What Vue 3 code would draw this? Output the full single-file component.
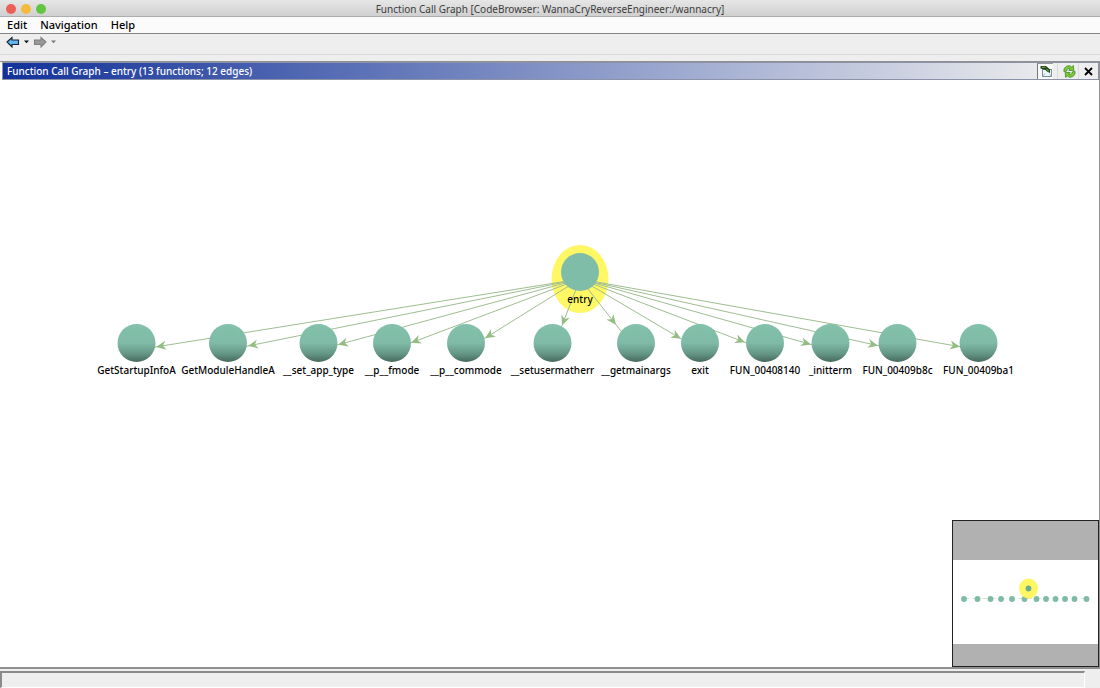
<script setup>
const root = { x: 580, y: 279 }
const nodes = [
  { x: 136.5, label: 'GetStartupInfoA', tip: 156 },
  { x: 228, label: 'GetModuleHandleA', tip: 248 },
  { x: 318.5, label: '__set_app_type', tip: 338 },
  { x: 392, label: '__p__fmode', tip: 411 },
  { x: 466, label: '__p__commode', tip: 485 },
  { x: 552.5, label: '__setusermatherr', tip: 562 },
  { x: 636, label: '__getmainargs', tip: 616 },
  { x: 700, label: 'exit', tip: 681 },
  { x: 765, label: 'FUN_00408140', tip: 745 },
  { x: 830.5, label: '_initterm', tip: 811 },
  { x: 897.5, label: 'FUN_00409b8c', tip: 878 },
  { x: 978.5, label: 'FUN_00409ba1', tip: 960 },
]
const targetY = 350

function arrow(n) {
  const dx = n.x - root.x
  const dy = targetY - root.y
  const y = root.y + ((n.tip - root.x) / dx) * dy
  const angle = (Math.atan2(dy, dx) * 180) / Math.PI
  return `translate(${n.tip} ${y}) rotate(${angle})`
}

const miniDots = [964, 977.5, 990.5, 1001, 1012, 1024.5, 1036.5, 1046, 1055.5, 1065, 1074.5, 1086.5]
</script>

<template>
  <div class="window">
    <header class="titlebar">
      <div class="lights">
        <button class="light red" aria-label="Close window"></button>
        <button class="light amber" aria-label="Minimize window"></button>
        <button class="light green" aria-label="Zoom window"></button>
      </div>
      <h1>Function Call Graph [CodeBrowser: WannaCryReverseEngineer:/wannacry]</h1>
    </header>

    <nav class="menubar">
      <button>Edit</button>
      <button>Navigation</button>
      <button>Help</button>
    </nav>

    <div class="toolbar">
      <button aria-label="Back">
        <svg width="14" height="12" viewBox="0 0 14 12">
          <path d="M1 6 6 1.5V4H12.5V8.5H6V11Z" fill="#62b5ee" stroke="#16222e" stroke-width="1.1" />
        </svg>
      </button>
      <button aria-label="Back history">
        <svg width="5" height="4" viewBox="0 0 5 4"><path d="M0 .5H5L2.5 3.3Z" fill="#111" /></svg>
      </button>
      <button aria-label="Forward">
        <svg width="14" height="12" viewBox="0 0 14 12">
          <path d="M13 6 8 1.5V4H1.5V8.5H8V11Z" fill="#999" stroke="#808080" stroke-width="1.1" />
        </svg>
      </button>
      <button aria-label="Forward history">
        <svg width="5" height="4" viewBox="0 0 5 4"><path d="M0 .5H5L2.5 3.3Z" fill="#777" /></svg>
      </button>
    </div>

    <main class="panel">
      <div class="panel-head">
        <h2>Function Call Graph – entry (13 functions; 12 edges)</h2>
        <div class="actions">
          <button class="sat" aria-label="Satellite view">
            <svg width="12" height="13" viewBox="0 0 12 13">
              <rect x="2.5" y="4.5" width="9" height="7" fill="#edf7fb" stroke="#70929f" />
              <path d="M2.5 11.5 5 8.5M11.5 11.5 9.5 9" stroke="#9db8c2" />
              <path d="M.5 1H6L10 4.5V8L7 6.5 5.5 5 4.5 4.5.5 3.5Z" fill="#1e3c1c" />
              <path d="M1.5 1.8H5L6 3H2Z" fill="#6aa32c" />
              <path d="M6.5 4 9 6.3" stroke="#6aa32c" stroke-width="1.2" />
            </svg>
          </button>
          <button class="refresh" aria-label="Refresh">
            <svg width="13" height="13" viewBox="0 0 13 13">
              <g fill="#7bc93c" stroke="#357f12" stroke-width=".7">
                <path d="M1 6.8C.2 3.2 3.2.2 7.2.9L8.6 2 10.4.6 10.8 5.6 5.8 5.4 7.2 3.8C5.4 3 3.8 4 3.8 6Z" />
                <path d="M12 6.2C12.8 9.8 9.8 12.8 5.8 12.1L4.4 11 2.6 12.4 2.2 7.4 7.2 7.6 5.8 9.2C7.6 10 9.2 9 9.2 7Z" />
              </g>
            </svg>
          </button>
          <button class="close" aria-label="Close panel">
            <svg width="9" height="9" viewBox="0 0 9 9"><path d="M1 1 8 8M8 1 1 8" stroke="#000" stroke-width="1.8" /></svg>
          </button>
        </div>
      </div>

      <div class="canvas">
        <svg class="graph" viewBox="1 80 1098 587" role="img" aria-label="Call graph of entry">
          <defs>
            <linearGradient id="ball" x1="0" y1="0" x2="0" y2="1">
              <stop offset="0" stop-color="#83c1ab" />
              <stop offset=".5" stop-color="#7fbba6" />
              <stop offset=".78" stop-color="#659686" />
              <stop offset="1" stop-color="#46685d" />
            </linearGradient>
          </defs>
          <ellipse :cx="root.x" :cy="root.y" rx="28.5" ry="34" fill="#fff764" />
          <g v-for="n in nodes" :key="n.label">
            <line :x1="root.x" :y1="root.y" :x2="n.x" :y2="targetY" stroke="#9fbd92" />
            <path d="M0 0-10-4.5-7 0-10 4.5Z" fill="#94bd85" :transform="arrow(n)" />
          </g>
          <circle :cx="root.x" cy="272" r="19" fill="#80bda8" />
          <text :x="root.x" y="303">entry</text>
          <g v-for="n in nodes" :key="n.label">
            <circle :cx="n.x" cy="343" r="19" fill="url(#ball)" />
            <text :x="n.x" y="374">{{ n.label }}</text>
          </g>
        </svg>

        <div class="satellite">
          <svg viewBox="953 521 145 145" role="img" aria-label="Satellite view of graph">
            <rect x="953" y="521" width="145" height="145" fill="#b1b1b1" />
            <rect x="953" y="560" width="145" height="84" fill="#fff" />
            <path d="M964 598.5H1086" stroke="#d8e5d4" stroke-dasharray="5 4" />
            <circle v-for="x in miniDots" :key="x" :cx="x" cy="599" r="2.9" fill="#7dbba5" />
            <ellipse cx="1028.5" cy="588.5" rx="9.5" ry="10" fill="#fff650" fill-opacity=".9" />
            <circle cx="1028.5" cy="588.5" r="2.9" fill="#6fac8f" />
          </svg>
        </div>
      </div>
    </main>

    <footer class="status">
      <div class="status-field"></div>
    </footer>
  </div>
</template>

<style>
body {
  margin: 0;
}
</style>

<style scoped>
.window {
  display: flex;
  flex-direction: column;
  height: 100vh;
  box-sizing: border-box;
  background: #eee;
  font-family: "Noto Sans", sans-serif;
  color: #000;
  overflow: hidden;
}
button {
  appearance: none;
  border: 0;
  padding: 0;
  margin: 0;
  background: none;
  font: inherit;
  color: inherit;
}
svg {
  display: block;
}
.titlebar {
  display: grid;
  grid-template-columns: 1fr auto 1fr;
  align-items: center;
  height: 17px;
  box-sizing: border-box;
  flex: none;
  background: linear-gradient(#e6e6e6, #d0d0d0);
  border-bottom: 1px solid #adadad;
}
.lights {
  display: flex;
  gap: 5px;
  padding: 1px 0 0 6px;
}
.light {
  width: 10px;
  height: 10px;
  border-radius: 50%;
}
.red {
  background: #ec5f56;
}
.amber {
  background: #f4b93d;
}
.green {
  background: #61c442;
}
h1 {
  margin: 0;
  padding-top: 2px;
  font: 400 10px/14px "Noto Sans", sans-serif;
  color: #3c3c3c;
}
.menubar {
  display: flex;
  gap: 13px;
  height: 17px;
  box-sizing: border-box;
  flex: none;
  padding: 0 7px;
  background: #fbfbfb;
  border-bottom: 1px solid #858585;
  font: 500 11px/16px "Noto Sans", sans-serif;
}
.toolbar {
  display: flex;
  align-items: center;
  gap: 4px;
  height: 21px;
  box-sizing: border-box;
  flex: none;
  padding: 0 6px 4px;
  border-bottom: 1px solid #d8d8d8;
}
.panel {
  display: flex;
  flex-direction: column;
  flex: 1;
  min-height: 0;
  margin-top: 6px;
  padding-left: 1px;
  border: solid #909090;
  border-width: 1px 1px 2px 0;
  background: #fff;
}
.panel-head {
  display: flex;
  align-items: center;
  flex: none;
  height: 18px;
  box-sizing: border-box;
  margin-left: 1px;
  border: 1px solid #8c93a8;
  background: linear-gradient(90deg, #12329a, #eee 97%);
}
h2 {
  flex: 1;
  margin: 0;
  padding-left: 4px;
  font: 500 10px/14px "Noto Sans", sans-serif;
  color: #fff;
}
.actions {
  display: flex;
  align-items: stretch;
  height: 16px;
  background: #eee;
}
.actions button {
  display: grid;
  place-items: center;
}
.actions .sat {
  width: 16px;
  border-left: 1px solid #777;
  border-top: 1px solid #999;
  background: #f8f8f8;
}
.actions .refresh {
  width: 22px;
  margin-left: 4px;
  padding-left: 2px;
  border: solid #dcdcdc;
  border-width: 0 1px;
}
.close {
  width: 19px;
}
.canvas {
  position: relative;
  flex: 1;
  min-height: 0;
}
.graph {
  width: 100%;
  height: 100%;
}
.graph text {
  font: 500 10px "Noto Sans", sans-serif;
  text-anchor: middle;
}
.satellite {
  position: absolute;
  right: 0;
  bottom: 0;
  width: 145px;
  height: 145px;
  border: 1px solid #222;
}
.status {
  display: flex;
  flex: none;
  height: 19px;
  box-sizing: border-box;
  padding: 2px 15px 0 0;
}
.status-field {
  flex: 1;
  border: 1px solid #fff;
  border-top: 2px solid #8a8a8a;
  border-left: 2px solid #8a8a8a;
  background: #eee;
}
</style>
